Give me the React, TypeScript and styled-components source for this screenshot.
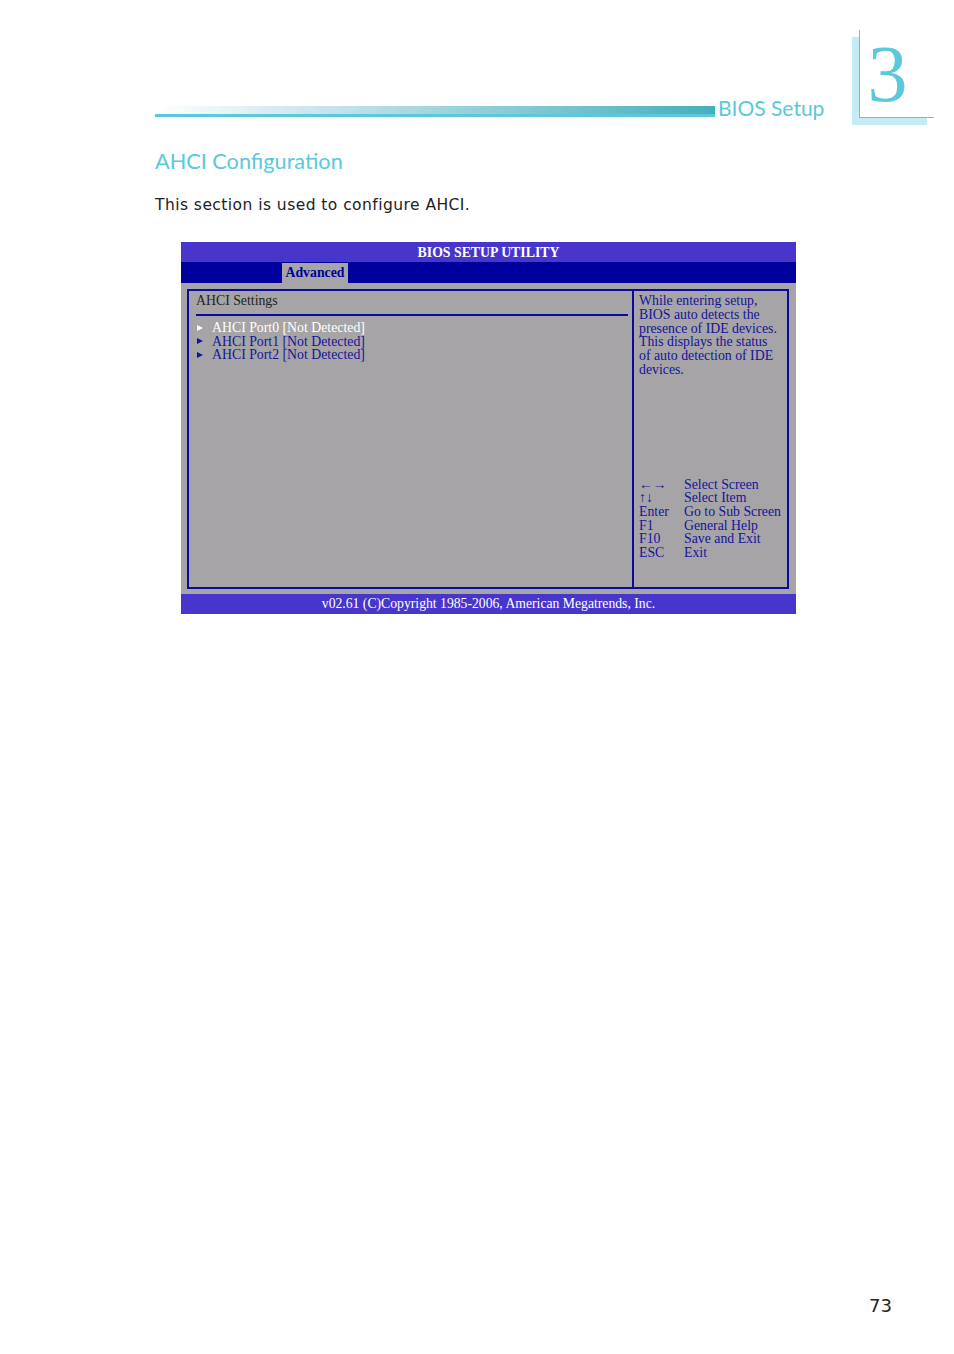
import React from 'react'
import styled, { createGlobalStyle } from 'styled-components'

const GlobalStyle = createGlobalStyle`
  html, body {
    margin: 0;
    padding: 0;
    background: #fff;
  }
`

const Page = styled.div`
  width: 954px;
  min-height: 1354px;
  display: flex;
  flex-direction: column;
  padding-left: 155px;
  box-sizing: border-box;
`

const Header = styled.header`
  display: flex;
  align-items: flex-end;
  height: 125px;
  padding-top: 30px;
  box-sizing: border-box;
`

const Rule = styled.div`
  width: 560px;
  margin-bottom: 8px;
  display: flex;
  flex-direction: column;
`

const RuleBand = styled.div`
  height: 8px;
  background: linear-gradient(to right, #ffffff 0%, #cfe9ee 25%, #8fcdd8 60%, #45afbd 100%);
`

const RuleLine = styled.div`
  height: 3px;
  background: #5bc8dc;
`

const SectionTag = styled.div`
  font-family: Lato, 'Open Sans', sans-serif;
  font-size: 21px;
  line-height: 26px;
  color: #5bc8dc;
  margin-left: 3px;
  margin-bottom: 4px;
`

const ChapterBox = styled.div`
  width: 75px;
  height: 88px;
  margin-left: 35px;
  margin-bottom: 7px;
  padding-left: 7px;
  box-sizing: border-box;
  border-left: 1px solid #5bc8dc;
  border-bottom: 1px solid #5bc8dc;
  box-shadow: -7px 7px 0 #c6ebf2;
  color: #5bc8dc;
  font-family: 'Liberation Serif', serif;
  font-size: 80px;
  line-height: 88px;
`

const Heading = styled.h1`
  margin: 23px 0 0;
  font-family: Lato, 'Open Sans', sans-serif;
  font-weight: 400;
  font-size: 21.7px;
  line-height: 26px;
  color: #5bc8dc;
`

const Intro = styled.p`
  margin: 22px 0 0;
  font-family: 'DejaVu Sans', Verdana, sans-serif;
  font-size: 15.5px;
  letter-spacing: 0.45px;
  line-height: 18px;
  color: #222;
`

const Bios = styled.div`
  margin: 28px 0 0 26px;
  width: 615px;
  font-family: 'Liberation Serif', 'Times New Roman', serif;
  font-size: 13.8px;
`

const TitleBar = styled.div`
  height: 20px;
  background: #4836cc;
  color: #fff;
  font-weight: bold;
  text-align: center;
  line-height: 21px;
`

const TabRow = styled.div`
  height: 21px;
  background: #00009c;
  display: flex;
  align-items: flex-end;
  padding-left: 101px;
`

const Tab = styled.div`
  height: 20px;
  width: 66px;
  background: #a6a4a6;
  color: #00009c;
  font-weight: bold;
  text-align: center;
  line-height: 20px;
`

const Body = styled.div`
  background: #a6a4a6;
  height: 311px;
  padding: 6px 7px 5px 6px;
  box-sizing: border-box;
`

const Frame = styled.div`
  height: 100%;
  border: 2px solid #0a0a9c;
  box-sizing: border-box;
  display: grid;
  grid-template-columns: 445px 1fr;
`

const LeftPane = styled.div`
  border-right: 2px solid #0a0a9c;
  padding: 3px 4px 0 7px;
`

const PaneTitle = styled.div`
  color: #222;
  line-height: 14px;
`

const Divider = styled.div`
  height: 2px;
  background: #0a0a9c;
  margin: 6px 0 5px;
`

const Item = styled.div<{ selected?: boolean }>`
  display: flex;
  align-items: center;
  line-height: 13.6px;
  color: ${({ selected }) => (selected ? '#ffffff' : '#14149a')};
`

const Arrow = styled.span<{ selected?: boolean }>`
  width: 0;
  height: 0;
  border-top: 3.5px solid transparent;
  border-bottom: 3.5px solid transparent;
  border-left: 6px solid ${({ selected }) => (selected ? '#ffffff' : '#14149a')};
  margin: 0 9px 0 1px;
`

const RightPane = styled.div`
  padding: 3px 2px 0 5px;
  color: #14149a;
  display: flex;
  flex-direction: column;
`

const Help = styled.div`
  line-height: 13.8px;
`

const Keys = styled.div`
  margin-top: 101px;
  display: grid;
  grid-template-columns: 45px 1fr;
  line-height: 13.6px;
`

const Footer = styled.div`
  height: 20px;
  background: #4836cc;
  color: #fff;
  font-size: 13.7px;
  text-align: center;
  line-height: 20px;
`

const PageNumber = styled.div`
  margin-top: auto;
  align-self: flex-end;
  padding: 0 62px 38px 0;
  font-family: 'DejaVu Sans', Verdana, sans-serif;
  font-size: 18px;
  line-height: 21px;
  color: #222;
`

const ports = ['AHCI Port0', 'AHCI Port1', 'AHCI Port2']

const keys: [string, string][] = [
  ['←→', 'Select Screen'],
  ['↑↓', 'Select Item'],
  ['Enter', 'Go to Sub Screen'],
  ['F1', 'General Help'],
  ['F10', 'Save and Exit'],
  ['ESC', 'Exit'],
]

export default function App() {
  return (
    <Page>
      <GlobalStyle />
      <Header>
        <Rule>
          <RuleBand />
          <RuleLine />
        </Rule>
        <SectionTag>BIOS Setup</SectionTag>
        <ChapterBox>3</ChapterBox>
      </Header>
      <Heading>AHCI Configuration</Heading>
      <Intro>This section is used to configure AHCI.</Intro>
      <Bios>
        <TitleBar>BIOS SETUP UTILITY</TitleBar>
        <TabRow>
          <Tab>Advanced</Tab>
        </TabRow>
        <Body>
          <Frame>
            <LeftPane>
              <PaneTitle>AHCI Settings</PaneTitle>
              <Divider />
              {ports.map((p, i) => (
                <Item key={p} selected={i === 0}>
                  <Arrow selected={i === 0} />
                  {p} [Not Detected]
                </Item>
              ))}
            </LeftPane>
            <RightPane>
              <Help>
                While entering setup,
                <br />
                BIOS auto detects the
                <br />
                presence of IDE devices.
                <br />
                This displays the status
                <br />
                of auto detection of IDE
                <br />
                devices.
              </Help>
              <Keys>
                {keys.map(([k, d]) => (
                  <React.Fragment key={k}>
                    <span>{k}</span>
                    <span>{d}</span>
                  </React.Fragment>
                ))}
              </Keys>
            </RightPane>
          </Frame>
        </Body>
        <Footer>v02.61 (C)Copyright 1985-2006, American Megatrends, Inc.</Footer>
      </Bios>
      <PageNumber>73</PageNumber>
    </Page>
  )
}
